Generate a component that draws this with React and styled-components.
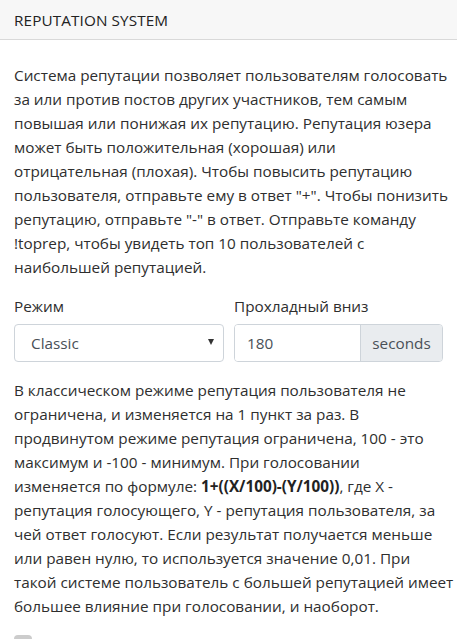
import React from 'react'
import styled, { createGlobalStyle } from 'styled-components'

const GlobalStyle = createGlobalStyle`
  html, body {
    margin: 0;
    padding: 0;
    background: #fff;
  }
  body {
    font-family: "Open Sans", "Noto Sans", sans-serif;
    color: #333;
  }
`

const Card = styled.div`
  width: 457px;
  background: #fff;
`

const CardHeader = styled.div`
  height: 40px;
  box-sizing: border-box;
  display: flex;
  align-items: center;
  padding: 0 14px;
  background: #f7f7f7;
  border-bottom: 1px solid #d9d9d9;
  font-size: 15.3px;
  color: #222;
  text-transform: uppercase;
  letter-spacing: 0.1px;
`

const CardBody = styled.div`
  padding: 23px 15px 0 14px;
`

const Text = styled.p`
  margin: 0 0 ${p => p.gap || 15}px;
  font-size: 15.3px;
  line-height: 24px;
  letter-spacing: 0;
  color: #2e2e2e;

  b {
    font-weight: 700;
    color: #222;
  }
`

const Line = styled.span`
  display: block;
  white-space: nowrap;
`

const FormRow = styled.div`
  display: grid;
  grid-template-columns: 210px 209px;
  column-gap: 10px;
  margin-bottom: 16px;
`

const Field = styled.div`
  display: flex;
  flex-direction: column;
`

const Label = styled.label`
  font-size: 15.3px;
  line-height: 24px;
  color: #2e2e2e;
  margin-bottom: 6px;
`

const Select = styled.div`
  height: 38px;
  box-sizing: border-box;
  border: 1px solid #ced4da;
  border-radius: 4px;
  display: flex;
  align-items: center;
  justify-content: space-between;
  padding: 0 9px 0 16px;
  font-size: 15.3px;
  color: #495057;
  background: #fff;
`

const Caret = styled.span`
  width: 0;
  height: 0;
  border-left: 3px solid transparent;
  border-right: 3px solid transparent;
  border-top: 6px solid #333;
  margin-top: -3px;
`

const InputGroup = styled.div`
  height: 38px;
  box-sizing: border-box;
  display: flex;
  border: 1px solid #ced4da;
  border-radius: 4px;
  overflow: hidden;
`

const Input = styled.div`
  flex: 1;
  display: flex;
  align-items: center;
  padding: 0 12px;
  font-size: 15.3px;
  color: #495057;
  background: #fff;
`

const Addon = styled.div`
  width: 82px;
  box-sizing: border-box;
  display: flex;
  align-items: center;
  justify-content: center;
  border-left: 1px solid #ced4da;
  background: #e9ecef;
  font-size: 15.3px;
  color: #495057;
`

const Checkbox = styled.div`
  width: 18px;
  height: 18px;
  border-radius: 4px;
  background: #ccc;
`

const intro = [
  'Система репутации позволяет пользователям голосовать',
  'за или против постов других участников, тем самым',
  'повышая или понижая их репутацию. Репутация юзера',
  'может быть положительная (хорошая) или',
  'отрицательная (плохая). Чтобы повысить репутацию',
  'пользователя, отправьте ему в ответ "+". Чтобы понизить',
  'репутацию, отправьте "-" в ответ. Отправьте команду',
  '!toprep, чтобы увидеть топ 10 пользователей с',
  'наибольшей репутацией.',
]

export default function App() {
  return (
    <Card>
      <GlobalStyle />
      <CardHeader>Reputation System</CardHeader>
      <CardBody>
        <Text>
          {intro.map(line => <Line key={line}>{line}</Line>)}
        </Text>
        <FormRow>
          <Field>
            <Label>Режим</Label>
            <Select>
              Classic
              <Caret />
            </Select>
          </Field>
          <Field>
            <Label>Прохладный вниз</Label>
            <InputGroup>
              <Input>180</Input>
              <Addon>seconds</Addon>
            </InputGroup>
          </Field>
        </FormRow>
        <Text gap={17}>
          <Line>В классическом режиме репутация пользователя не</Line>
          <Line>ограничена, и изменяется на 1 пункт за раз. В</Line>
          <Line>продвинутом режиме репутация ограничена, 100 - это</Line>
          <Line>максимум и -100 - минимум. При голосовании</Line>
          <Line>изменяется по формуле: <b>1+((X/100)-(Y/100))</b>, где X -</Line>
          <Line>репутация голосующего, Y - репутация пользователя, за</Line>
          <Line>чей ответ голосуют. Если результат получается меньше</Line>
          <Line>или равен нулю, то используется значение 0,01. При</Line>
          <Line>такой системе пользователь с большей репутацией имеет</Line>
          <Line>большее влияние при голосовании, и наоборот.</Line>
        </Text>
        <Checkbox />
      </CardBody>
    </Card>
  )
}
